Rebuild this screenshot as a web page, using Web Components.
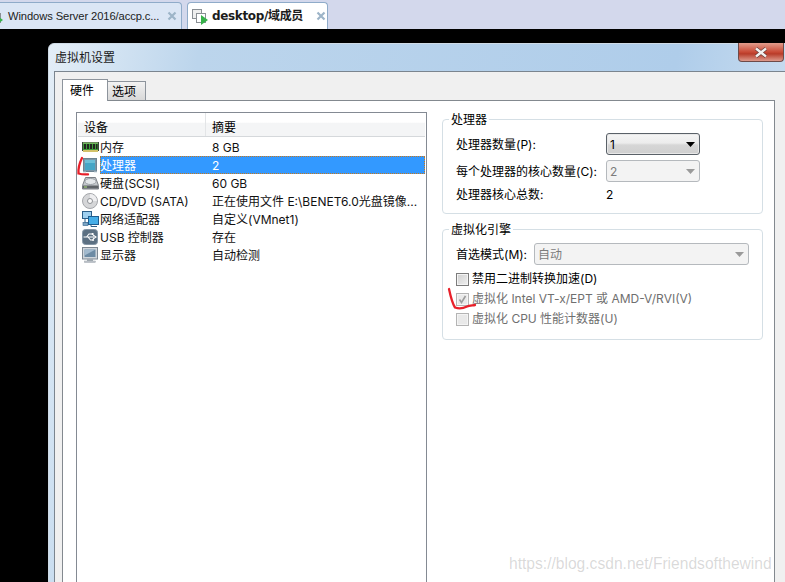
<!DOCTYPE html>
<html lang="zh"><head><meta charset="utf-8"><title>虚拟机设置</title>
<style>
html,body{margin:0;padding:0;height:100%;overflow:hidden;background:#000}
body{width:785px;height:582px;position:relative;font:12px/16px Inter,"Noto Sans CJK SC",sans-serif;color:#000}
</style></head><body>
<app-tabbar>
  <tab-item>Windows Server 2016/accp.c...</tab-item>
  <tab-item active>desktop/域成员</tab-item>
</app-tabbar>
<vm-dialog heading="虚拟机设置">
  <device-list>
    <device-row icon="ram" summary="8 GB">内存</device-row>
    <device-row icon="cpu" summary="2" selected>处理器</device-row>
    <device-row icon="disk" summary="60 GB">硬盘(SCSI)</device-row>
    <device-row icon="cd" summary="正在使用文件 E:\BENET6.0光盘镜像...">CD/DVD (SATA)</device-row>
    <device-row icon="net" summary="自定义(VMnet1)">网络适配器</device-row>
    <device-row icon="usb" summary="存在">USB 控制器</device-row>
    <device-row icon="mon" summary="自动检测">显示器</device-row>
  </device-list>
  <div slot="side">
    <group-box heading="处理器" class="g1">
      <form-row label="处理器数量(P):" w="150"><combo-box value="1" width="94" focused></combo-box></form-row>
      <form-row label="每个处理器的核心数量(C):" w="150"><combo-box value="2" width="94" disabled></combo-box></form-row>
      <form-row label="处理器核心总数:" w="150" short>2</form-row>
    </group-box>
    <group-box heading="虚拟化引擎" class="g2">
      <form-row label="首选模式(M):" w="78" tight><combo-box value="自动" width="215" disabled></combo-box></form-row>
      <check-box>禁用二进制转换加速(D)</check-box>
      <check-box checked disabled>虚拟化 Intel VT-x/EPT 或 AMD-V/RVI(V)</check-box>
      <check-box disabled>虚拟化 CPU 性能计数器(U)</check-box>
    </group-box>
  </div>
</vm-dialog>
<ink-marks></ink-marks>
<script>
const def=(name,html,init)=>customElements.define(name,class extends HTMLElement{
  constructor(){super();this.attachShadow({mode:'open'})}
  connectedCallback(){this.shadowRoot.innerHTML=typeof html==='function'?html(this):html;init&&init(this)}
});
const ICONS={
ram:`<svg viewBox="0 0 17 14" width="17" height="14"><rect x="0.5" y="2.5" width="16" height="8" fill="#3f9a3a" stroke="#3a4a3a"/><g fill="#20261f"><rect x="2" y="4" width="2" height="5"/><rect x="5" y="4" width="2" height="5"/><rect x="8" y="4" width="2" height="5"/><rect x="11" y="4" width="2" height="5"/><rect x="14" y="4" width="1.5" height="5"/></g><rect x="1" y="10" width="15" height="2" fill="#d3c26a"/><path d="M1 3h15" stroke="#9ccf7e"/></svg>`,
cpu:`<svg viewBox="0 0 16 16" width="16" height="16"><rect x="1.5" y="1.5" width="13" height="13" fill="#7c97a8" stroke="#6d8492"/><rect x="3" y="3" width="10" height="10" fill="#45a6c6"/><path d="M3 3h10v3H3z" fill="#6cc0d8"/><path d="M1 15h3M12 15h3" stroke="#c8d4dc"/></svg>`,
disk:`<svg viewBox="0 0 17 16" width="17" height="16"><path d="M3.5 2.5h10l3 8v3.500h-16v-3.500z" fill="#c4c8cc" stroke="#7a7f85"/><ellipse cx="8.500" cy="6.500" rx="5.500" ry="3" fill="#e4e7ea" stroke="#9ca2a8"/><rect x="1" y="10.500" width="15" height="3" fill="#5e6368"/><rect x="2" y="11.500" width="3" height="1" fill="#a9e07a"/></svg>`,
cd:`<svg viewBox="0 0 16 16" width="16" height="16"><circle cx="8" cy="8" r="7.500" fill="#d5d6d8" stroke="#a4a6aa"/><path d="M8 1A7 7 0 0 1 15 8H10A2 2 0 0 0 8 6z" fill="#eeeef0"/><circle cx="8" cy="8" r="2.500" fill="#fafafa" stroke="#8f9296"/></svg>`,
net:`<svg viewBox="0 0 17 16" width="17" height="16"><rect x="0.500" y="0.500" width="9" height="7" fill="#9fd0f0" stroke="#2c5f8a"/><rect x="6.500" y="5.500" width="10" height="8" fill="#46aee8" stroke="#1f5d90"/><path d="M3 8v4h3M9 14v1.500h6" stroke="#2c5f8a" fill="none"/><rect x="1" y="11.500" width="5" height="3" fill="#7ea6c4" stroke="#2c5f8a" stroke-width=".6"/></svg>`,
usb:`<svg viewBox="0 0 16 16" width="16" height="16"><rect x="0.500" y="0.500" width="15" height="15" rx="3" fill="#5c7082" stroke="#8496a6"/><path d="M1.500 8H12M11 6l3 2-3 2M4.500 8l2.500-3h2.500M6 8l2.500 3H10" stroke="#fff" stroke-width="1.100" fill="none"/><rect x="9.500" y="4" width="2" height="2" fill="#fff"/><circle cx="11" cy="11" r="1.100" fill="#fff"/></svg>`,
mon:`<svg viewBox="0 0 16 16" width="16" height="16"><rect x="0.500" y="0.500" width="15" height="11.500" fill="#d0d6dc" stroke="#7e8892"/><rect x="2.500" y="2.500" width="11" height="7.500" fill="#6d8ba4"/><path d="M2.500 2.500h11l-11 6z" fill="#a2bace"/><rect x="5" y="12" width="6" height="2" fill="#a3abb3"/><rect x="2.500" y="14" width="11" height="1.500" fill="#c3c9cf" stroke="#8e969e" stroke-width=".4"/></svg>`
};
def('app-tabbar',`<style>:host{display:flex;height:29px;box-sizing:border-box;background:#d3d8ec;padding-top:2px;gap:5px;overflow:hidden}</style><slot></slot>`);
def('tab-item',h=>{const a=h.hasAttribute('active');return `<style>
:host{display:flex;align-items:center;box-sizing:border-box;height:27px;border:1px solid #8fabc9;border-bottom:0;border-radius:4px 4px 0 0;
 width:${a?141:198}px;margin-left:${a?0:-16}px;background:${a?'#fff':'#dbe6f5'};font:${a?'700 12px':'11.200px'}/16px ${a?'"DejaVu Sans"':'"Liberation Sans"'},"Noto Sans CJK SC",sans-serif;color:#1c1c1c;flex:none;padding-left:${a?4:2}px}
svg.i{flex:none;margin-right:${a?4:5}px}.t{white-space:nowrap;flex:none;width:${a?95:150}px;letter-spacing:${a?'-.35px':'-.1px'}}
svg.x{flex:none;margin-left:9px}</style>
<svg class="i" width="16" height="18" viewBox="0 0 16 18" fill="none"><rect x=".5" y="2.500" width="9" height="9" fill="#eee" stroke="#8a8f94"/><rect x="4.500" y="6.500" width="9" height="9" fill="#fff" stroke="#8a8f94"/><path d="M9 8l7 5-7 5z" fill="#37b24a"/></svg>
<span class="t"><slot></slot></span>
<svg class="x" width="10" height="10" viewBox="0 0 10 10"><path d="M1.500 1.500l7 7M8.500 1.500l-7 7" stroke="#9db4c8" stroke-width="2.200"/></svg>`});
def('vm-dialog',h=>`<style>
:host{display:block;box-sizing:border-box;margin:14px 0 0 48px;width:744px;height:560px;background:linear-gradient(100deg,#e4eef7 0,#bcd5ec 18%,#afcdea 75%,#cfe0f1 94%);border:1px solid #cfdbe6;border-radius:6px 6px 0 0;padding:0 5px;position:relative}
.h{height:27px;line-height:26px;padding-left:1px;font-size:12px;color:#1a1a1a;box-sizing:border-box;padding-top:1px}
.close{position:absolute;top:-1px;right:7px;width:46px;height:19px;box-sizing:border-box;border:1px solid #6e4a48;border-top:0;border-radius:0 0 4px 4px;background:linear-gradient(#e09c8c,#c94a36 50%,#b83c2a 60%,#dd9a8c);display:flex;align-items:center;justify-content:center}
.client{background:#f0f0f0;border:1px solid #7b858f;height:520px;box-sizing:border-box;padding:7px 0 0 7px}
.tabs{display:flex;align-items:flex-end;height:21px;position:relative;z-index:1}
.tab{box-sizing:border-box;border:1px solid #8d949c;border-bottom:0;display:flex;align-items:center;padding-left:7px}
.t1{width:46px;height:22px;background:#fff;margin-bottom:-1px}
.t2{width:38px;height:19px;background:linear-gradient(#f2f2f2,#d8d8d8);border-left:0;padding:1px 0 0 4px}
.pane{background:#fff;border:1px solid #83898f;height:500px;width:713px;box-sizing:border-box;display:flex;padding:11px 0 0 13px}
.side{margin-left:15px;width:321px;padding-top:7px}
</style>
<div class="h">${h.getAttribute('heading')}</div>
<div class="close"><svg width="16" height="11" viewBox="0 0 16 11"><path d="M3 1.500l10 8M13 1.500l-10 8" stroke="#5d3a38" stroke-width="3.600"/><path d="M3 1.500l10 8M13 1.500l-10 8" stroke="#f4f1ef" stroke-width="2.400"/></svg></div>
<div class="client"><div class="tabs"><div class="tab t1">硬件</div><div class="tab t2">选项</div></div>
<div class="pane"><slot></slot><div class="side"><slot name="side"></slot></div></div></div>`);
def('device-list',`<style>:host{display:block;box-sizing:border-box;flex:none;width:351px;height:480px;border:1px solid #848a93;padding:0 1px}
.head{display:flex;height:23px;background:linear-gradient(#fff 0,#fff 40%,#f4f5f6 45%,#f4f5f6 100%);border-bottom:1px solid #d5d8db;line-height:30px;margin-bottom:1px;box-sizing:content-box}
.c1{width:128px;padding-left:6px;box-sizing:border-box;border-right:1px solid #e3e5e7}.c2{padding-left:6px}</style>
<div class="head"><div class="c1">设备</div><div class="c2">摘要</div></div><slot></slot>`);
def('device-row',h=>{const s=h.hasAttribute('selected');return `<style>:host{display:flex;height:18px;align-items:center;width:347px;box-sizing:border-box;white-space:nowrap;color:#111}
.ic{width:18px;flex:none;margin-left:4px;display:flex;align-items:center;height:18px}.n{width:112px;flex:none;height:18px;line-height:20px;box-sizing:border-box}.v{line-height:20px;flex:1;min-width:0;height:18px;overflow:hidden}
${s?'.wrap{display:flex;flex:1;background:#3399ff;outline:1px dotted #c9781a;outline-offset:-1px;color:#fff;height:18px}':'.wrap{display:flex;flex:1}'}
</style><div class="ic">${ICONS[h.getAttribute('icon')]}</div><div class="wrap"><div class="n"><slot></slot></div><div class="v">${h.getAttribute('summary')}</div></div>`});
def('group-box',h=>`<style>:host{display:block;box-sizing:border-box;border:1px solid #d5dfe5;border-radius:4px;padding:0 0 0 13px;width:321px;background:#fff}
:host(.g1){height:95px;margin-bottom:15px}:host(.g2){height:111px}
.l{display:table;background:#fff;margin:-8px 0 0 -7px;padding:0 2px;line-height:16px;height:16px}
.b{display:flex;flex-direction:column;padding-top:5px}</style><div class="l">${h.getAttribute('heading')}</div><div class="b"><slot></slot></div>`);
def('form-row',h=>{const s=h.hasAttribute('short');return `<style>:host{display:flex;align-items:center;height:${s?'15px':'22px'};margin-bottom:${h.hasAttribute('tight')?4:5}px;white-space:nowrap}.l{width:${h.getAttribute('w')}px;flex:none;padding-top:${s?0:1}px}</style><div class="l">${h.getAttribute('label')}</div><slot></slot>`});
def('combo-box',h=>{const d=h.hasAttribute('disabled');return `<style>:host{display:flex;align-items:center;box-sizing:border-box;width:${h.getAttribute('width')}px;height:22px;border:1px solid ${d?'#b5b9bd':'#5a6168'};border-radius:3px;background:${d?'#f3f3f3':'linear-gradient(#f5f5f5,#ececec 45%,#d6d6d6 55%,#cfcfcf)'};color:${d?'#7c7c7c':'#000'};padding-left:3px;justify-content:space-between;padding-right:4px}
span{padding-top:1px}${d?'':':host{box-shadow:inset 0 0 0 1px #e8e8e8}'}</style><span>${h.getAttribute('value')}</span><svg width="9" height="5" viewBox="0 0 9 5"><path d="M0 0h9L4.500 5z" fill="${d?'#9a9a9a':'#000'}"/></svg>`});
def('check-box',h=>{const d=h.hasAttribute('disabled'),c=h.hasAttribute('checked');return `<style>:host{display:flex;align-items:center;height:20px;white-space:nowrap;color:${d?'#6f6f6f':'#000'};gap:3px}
.b{width:13px;height:13px;box-sizing:border-box;border:1px solid ${d?'#b4b4b4':'#7c7c7c'};background:${d?'#e9e9e9':'linear-gradient(135deg,#cfcfcf,#f0f0f0)'};box-shadow:inset 0 0 0 1px #f4f4f4;flex:none}
.b svg{display:block}</style><div class="b">${c?'<svg width="11" height="11" viewBox="0 0 11 11"><path d="M2.500 5.500l2 3 4-6.500" stroke="#9c9c9c" stroke-width="1.600" fill="none"/></svg>':''}</div><span><slot></slot></span>`});
def('ink-marks',`<style>:host{position:absolute;left:0;top:0;width:785px;height:582px;pointer-events:none;display:block}
.w{position:absolute;left:509px;top:552px;font:15.600px/24px "Liberation Sans",sans-serif;color:rgba(120,120,120,.28);white-space:nowrap}svg{position:absolute;left:0;top:0}</style>
<svg width="785" height="582" fill="none" stroke="#e8202a" stroke-width="2.300" stroke-linecap="round"><path d="M82 158C80 162 78 167 78.500 173.500C82 174.500 85 174.500 88 174.300"/><path d="M449 289C450.500 296 452 303 455 307.500C459 309 463 308.500 467 306.500C469 305.500 472 305.500 475 305"/></svg>
<div class="w">https://blog.csdn.net/Friendsofthewind</div>`);
</script>
</body></html>
